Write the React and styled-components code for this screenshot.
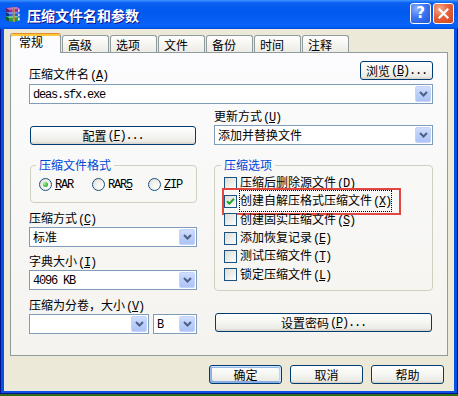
import React from "react";
import styled, { createGlobalStyle, css } from "styled-components";

const GlobalStyle = createGlobalStyle`
  html, body { margin: 0; padding: 0; background: #3a7a1e; }
  body {
    font-family: "Noto Sans CJK SC", "Noto Sans", sans-serif;
    font-size: 12px;
    color: #000;
  }
  #root { width: 458px; height: 396px; overflow: hidden; background: linear-gradient(180deg, #4f8c2c, #2f6a18); }
`;

const Window = styled.div`
  width: 458px;
  height: 394px;
  display: flex;
  flex-direction: column;
`;

const TitleBar = styled.div`
  flex: none;
  height: 29px;
  display: flex;
  align-items: center;
  padding: 0 4px 0 5px;
  box-sizing: border-box;
  background: linear-gradient(180deg, #3d95ff 0%, #0a5ff0 10%, #0058ee 40%, #0a63f8 85%, #0060f6 93%, #0049dc 100%);
`;

const Title = styled.div`
  margin-left: 5px;
  color: #fff;
  font-weight: bold;
  font-size: 14px;
  line-height: 16px;
  text-shadow: 1px 1px #0f1089;
`;

const Controls = styled.div`
  margin-left: auto;
  align-self: flex-start;
  margin-top: 3px;
  display: flex;
  gap: 2px;
`;

const CtrlBtn = styled.div`
  width: 21px;
  height: 21px;
  box-sizing: border-box;
  border: 1px solid #fff;
  border-radius: 3px;
  display: flex;
  align-items: center;
  justify-content: center;
  color: #fff;
  font-family: "DejaVu Sans", sans-serif;
  font-weight: bold;
  font-size: 15px;
  line-height: 15px;
  ${(p) =>
    p.$close
      ? css`background: radial-gradient(circle at 30% 25%, #f6a98c 0%, #e6623a 45%, #cc4520 100%);`
      : css`background: radial-gradient(circle at 30% 25%, #8ab2ff 0%, #3d75f2 45%, #1e54d6 100%);`}
`;

const Frame = styled.div`
  flex: 1;
  display: flex;
  background: #0a50e4;
  border: 1px solid #00138c;
  border-top: 0;
  padding: 0 3px 2px;
`;

const Body = styled.div`
  flex: 1;
  background: #ece9d8;
  padding: 4px 6px 0 6px;
  display: flex;
  flex-direction: column;
`;

const TabStrip = styled.div`
  height: 19px;
  display: flex;
  align-items: flex-end;
  gap: 1px;
`;

const Tab = styled.div`
  box-sizing: border-box;
  border: 1px solid #919b9c;
  border-bottom: 0;
  border-radius: 3px 3px 0 0;
  line-height: 14px;
  white-space: nowrap;
  ${(p) =>
    p.$active
      ? css`
          width: 51px;
          height: 20px;
          margin-bottom: -1px;
          position: relative;
          z-index: 1;
          padding: 1px 0 0 8px;
          background: #fcfcfe;
          border-top-color: #e68b2c;
          box-shadow: inset 0 2px #ffc83c;
        `
      : css`
          width: 47px;
          height: 17px;
          padding: 2px 0 0 5px;
          background: linear-gradient(180deg, #ffffff 0%, #f4f3ee 60%, #ecebe6 100%);
        `}
`;

const Panel = styled.div`
  height: 304px;
  box-sizing: border-box;
  border: 1px solid #919b9c;
  background: linear-gradient(180deg, #fcfcfe 0%, #f4f3ee 100%);
  padding: 8px 14px 0 18px;
  display: flex;
  flex-direction: column;
`;

const TopRow = styled.div`
  height: 19px;
  display: flex;
  justify-content: space-between;
  align-items: flex-start;
`;

const Columns = styled.div`
  display: grid;
  grid-template-columns: 168px 219px;
  column-gap: 17px;
`;

const Col = styled.div`
  display: flex;
  flex-direction: column;
  align-items: flex-start;
`;

const Label = styled.div`
  height: 14px;
  line-height: 14px;
  white-space: nowrap;
  margin-top: ${(p) => p.$mt || 0}px;
`;

const Mono = styled.span`
  font-family: "Liberation Mono", "DejaVu Sans Mono", monospace;
  font-size: 12px;
  letter-spacing: -1.2px;
  margin-left: ${(p) => p.$ml || 0}px;
`;

const U = styled.span`
  text-decoration: underline;
  text-underline-offset: 1px;
`;

const Acc = ({ k }) => (
  <Mono $ml={1}>
    (<U>{k}</U>)
  </Mono>
);

const Combo = styled.div`
  box-sizing: border-box;
  width: ${(p) => p.$w || "100%"};
  height: 20px;
  border: 1px solid #7f9db9;
  background: #fff;
  display: flex;
  align-items: center;
  margin-top: ${(p) => p.$mt || 0}px;
`;

const ComboText = styled.div`
  flex: 1;
  padding-left: 3px;
  line-height: 16px;
  white-space: nowrap;
  overflow: hidden;
`;

const DropBtn = styled.div`
  width: 16px;
  height: 16px;
  box-sizing: border-box;
  margin: 1px 1px 1px 0;
  border: 1px solid #c3d3fd;
  border-radius: 2px;
  background: linear-gradient(180deg, #d0defd 0%, #bccffa 45%, #adc4f6 100%);
  display: flex;
  align-items: center;
  justify-content: center;
`;

const Chevron = () => (
  <svg width="9" height="6" viewBox="0 0 9 6">
    <path d="M1 1 L4.5 4.5 L8 1" fill="none" stroke="#4d6185" strokeWidth="2" />
  </svg>
);

const ComboBox = ({ children, w, mt }) => (
  <Combo $w={w} $mt={mt}>
    <ComboText>{children}</ComboText>
    <DropBtn>
      <Chevron />
    </DropBtn>
  </Combo>
);

const ComboPair = styled.div`
  width: 100%;
  display: flex;
  gap: 4px;
  margin-top: ${(p) => p.$mt || 0}px;
`;

const Button = styled.div`
  box-sizing: border-box;
  width: ${(p) => p.$w};
  height: 19px;
  margin-top: ${(p) => p.$mt || 0}px;
  margin-left: ${(p) => p.$ml || 0}px;
  border: 1px solid #003c74;
  border-radius: 3px;
  background: linear-gradient(180deg, #ffffff 0%, #f7f7f4 40%, #ecebe6 85%, #d6d0c5 100%);
  display: flex;
  align-items: center;
  justify-content: center;
  line-height: 14px;
  white-space: nowrap;
  ${(p) =>
    p.$default &&
    css`
      box-shadow: inset -1px 1px #cee7ff, inset 1px 2px #98b8ea, inset -2px 2px #bcd4f6,
        inset 1px -1px #89ade4, inset 2px -2px #89ade4;
    `}
`;

const Group = styled.fieldset`
  margin: ${(p) => p.$mt || 0}px 0 0 ${(p) => p.$ml || 0}px;
  padding: ${(p) => p.$pad};
  width: ${(p) => p.$w}px;
  height: ${(p) => p.$h}px;
  box-sizing: border-box;
  border: 1px solid #d0d0bf;
  border-radius: 4px;
  min-width: 0;
`;

const Legend = styled.legend`
  color: #0046d5;
  padding: 0 3px;
  margin-left: -3px;
  line-height: 14px;
  font-size: 12px;
`;

const RadioRow = styled.div`
  display: flex;
  height: 13px;
`;

const RadioItem = styled.div`
  display: flex;
  align-items: center;
  gap: 3px;
  width: ${(p) => (p.$w ? `${p.$w}px` : "auto")};
`;

const RadioCircle = styled.span`
  width: 13px;
  height: 13px;
  box-sizing: border-box;
  border-radius: 50%;
  border: 1px solid #1c5180;
  background: radial-gradient(circle at 65% 65%, #ffffff 0%, #ecebe6 60%, #d2d2c8 100%);
  display: inline-flex;
  align-items: center;
  justify-content: center;
  flex: none;
`;

const RadioDot = styled.span`
  width: 5px;
  height: 5px;
  border-radius: 50%;
  background: radial-gradient(circle at 35% 35%, #b4f4a8 0%, #4cc44c 45%, #21a121 100%);
`;

const CheckList = styled.div`
  display: flex;
  flex-direction: column;
`;

const CheckRow = styled.div`
  position: relative;
  height: 18.33px;
  display: flex;
  align-items: center;
  gap: 3px;
  white-space: nowrap;
`;

const CheckBox = styled.span`
  width: 13px;
  height: 13px;
  box-sizing: border-box;
  border: 1px solid #1c5180;
  background: linear-gradient(135deg, #dcdcd7 0%, #f4f4f0 70%, #ffffff 100%);
  display: inline-flex;
  align-items: center;
  justify-content: center;
  flex: none;
`;

const CheckText = styled.span`
  line-height: 14px;
  ${(p) =>
    p.$focus &&
    css`
      border: 1px dotted #000;
      padding: 2px 0;
      margin: -3px -1px;
    `}
`;

const Annotation = styled.div`
  position: absolute;
  left: -2px;
  top: -4px;
  width: 179px;
  height: 27px;
  box-sizing: border-box;
  border: 2px solid #e2463f;
  pointer-events: none;
`;

const Footer = styled.div`
  margin-top: 9px;
  padding-right: 4px;
  display: flex;
  justify-content: flex-end;
  gap: 8px;
`;

const RarIcon = () => (
  <svg width="17" height="17" viewBox="0 0 17 17">
    <polygon points="1,2 12,1 15,3 4,4" fill="#d36ac0" />
    <polygon points="1,2 4,4 4,7 1,5.5" fill="#6a1660" />
    <polygon points="4,4 15,3 15,6 4,7" fill="#a02a90" />
    <polygon points="1,6.5 12,5.8 15,7.5 4,8" fill="#6fa0ff" />
    <polygon points="1,6.5 4,8 4,11 1,9.5" fill="#12307a" />
    <polygon points="4,8 15,7.5 15,10.5 4,11" fill="#2e5fd0" />
    <polygon points="1,10.5 12,10 15,11.5 4,12" fill="#7fdc86" />
    <polygon points="1,10.5 4,12 4,15.5 1,14" fill="#145a1e" />
    <polygon points="4,12 15,11.5 15,14.8 4,15.5" fill="#2f9a3a" />
    <rect x="13.2" y="3.3" width="1.3" height="2.5" fill="#fff" />
    <rect x="13.2" y="7.8" width="1.3" height="2.4" fill="#fff" />
    <rect x="13.2" y="11.8" width="1.3" height="2.6" fill="#fff" />
    <polygon points="7.5,1 9.5,1 10,16 8,16" fill="#d9b36a" />
    <polygon points="8.2,1 9,1 9.5,16 8.7,16" fill="#8a6320" />
  </svg>
);

const CloseX = () => (
  <svg width="11" height="11" viewBox="0 0 11 11">
    <path d="M1.5 1.5 L9.5 9.5 M9.5 1.5 L1.5 9.5" stroke="#fff" strokeWidth="2.2" strokeLinecap="square" />
  </svg>
);

const Check = () => (
  <svg width="9" height="9" viewBox="0 0 9 9">
    <path d="M1 4.2 L3.4 6.6 L8 1.8" fill="none" stroke="#21a121" strokeWidth="2" />
  </svg>
);

const tabs = ["常规", "高级", "选项", "文件", "备份", "时间", "注释"];

const options = [
  { text: "压缩后删除源文件", k: "D" },
  { text: "创建自解压格式压缩文件", k: "X", checked: true, focus: true },
  { text: "创建固实压缩文件", k: "S" },
  { text: "添加恢复记录", k: "E" },
  { text: "测试压缩文件", k: "T" },
  { text: "锁定压缩文件", k: "L" },
];

const formats = [
  { pre: "", u: "R", post: "AR", w: 53, selected: true },
  { pre: "RAR", u: "5", post: "", w: 56 },
  { pre: "", u: "Z", post: "IP" },
];

export default function App() {
  return (
    <>
      <GlobalStyle />
      <Window>
        <TitleBar>
          <RarIcon />
          <Title>压缩文件名和参数</Title>
          <Controls>
            <CtrlBtn>?</CtrlBtn>
            <CtrlBtn $close>
              <CloseX />
            </CtrlBtn>
          </Controls>
        </TitleBar>
        <Frame>
          <Body>
            <TabStrip>
              {tabs.map((t, i) => (
                <Tab key={t} $active={i === 0}>
                  {t}
                </Tab>
              ))}
            </TabStrip>
            <Panel>
              <TopRow>
                <Label $mt={6}>
                  压缩文件名<Acc k="A" />
                </Label>
                <Button $w="73px">
                  浏览<Acc k="B" />
                  <Mono>...</Mono>
                </Button>
              </TopRow>
              <ComboBox mt={4}>
                <Mono>deas.sfx.exe</Mono>
              </ComboBox>
              <Columns>
                <Col>
                  <Button $w="166px" $ml={1} $mt={22}>
                    配置<Acc k="F" />
                    <Mono>...</Mono>
                  </Button>
                  <Group $mt={13} $ml={1} $w={167} $h={45} $pad="6px 0 0 8px">
                    <Legend>压缩文件格式</Legend>
                    <RadioRow>
                      {formats.map((f, i) => (
                        <RadioItem key={i} $w={f.w}>
                          <RadioCircle>{f.selected && <RadioDot />}</RadioCircle>
                          <Mono>
                            {f.pre}
                            <U>{f.u}</U>
                            {f.post}
                          </Mono>
                        </RadioItem>
                      ))}
                    </RadioRow>
                  </Group>
                  <Label $mt={8}>
                    压缩方式<Acc k="C" />
                  </Label>
                  <ComboBox mt={2}>标准</ComboBox>
                  <Label $mt={7}>
                    字典大小<Acc k="I" />
                  </Label>
                  <ComboBox mt={2}>
                    <Mono>4096 KB</Mono>
                  </ComboBox>
                  <Label $mt={8}>
                    压缩为分卷，大小<Acc k="V" />
                  </Label>
                  <ComboPair $mt={2}>
                    <ComboBox w="120px" />
                    <ComboBox w="44px">
                      <Mono>B</Mono>
                    </ComboBox>
                  </ComboPair>
                </Col>
                <Col>
                  <Label $mt={5}>
                    更新方式<Acc k="U" />
                  </Label>
                  <ComboBox mt={2}>添加并替换文件</ComboBox>
                  <Group $mt={13} $w={219} $h={133} $pad="2px 0 0 9px">
                    <Legend>压缩选项</Legend>
                    <CheckList>
                      {options.map((o) => (
                        <CheckRow key={o.k}>
                          <CheckBox>{o.checked && <Check />}</CheckBox>
                          <CheckText $focus={o.focus}>
                            {o.text}
                            <Acc k={o.k} />
                          </CheckText>
                          {o.focus && <Annotation />}
                        </CheckRow>
                      ))}
                    </CheckList>
                  </Group>
                  <Button $w="217px" $ml={1} $mt={22}>
                    设置密码<Acc k="P" />
                    <Mono>...</Mono>
                  </Button>
                </Col>
              </Columns>
            </Panel>
            <Footer>
              <Button $w="73px" $default>
                确定
              </Button>
              <Button $w="73px">取消</Button>
              <Button $w="73px">帮助</Button>
            </Footer>
          </Body>
        </Frame>
      </Window>
    </>
  );
}
